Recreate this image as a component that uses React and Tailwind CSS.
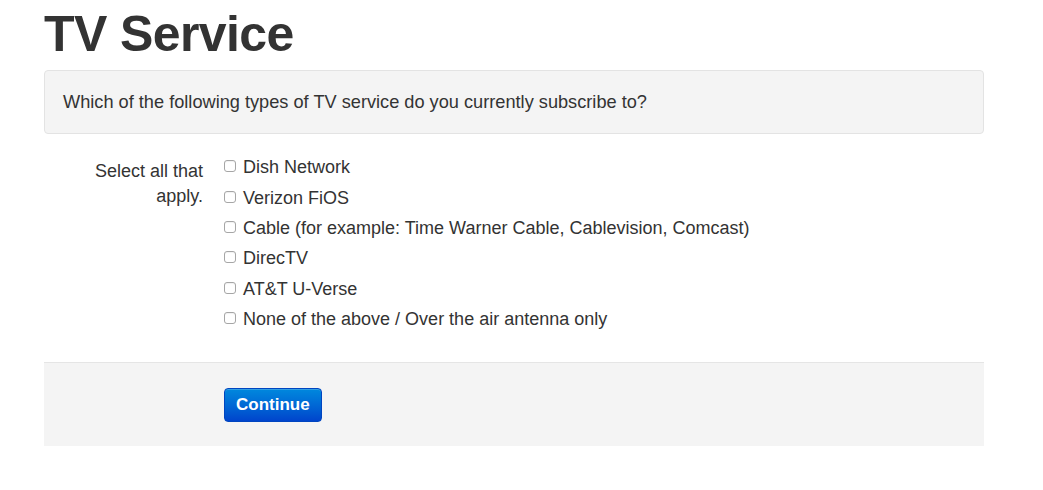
export default function App() {
  const options = [
    "Dish Network",
    "Verizon FiOS",
    "Cable (for example: Time Warner Cable, Cablevision, Comcast)",
    "DirecTV",
    "AT&T U-Verse",
    "None of the above / Over the air antenna only",
  ];
  return (
    <div
      className="min-h-[490px] bg-white text-[#333333] px-[44px]"
      style={{ fontFamily: '"Liberation Sans", Arial, Helvetica, sans-serif' }}
    >
      <div className="w-[940px]">
        <h1 className="pt-[7px] mb-[8px] text-[50px] leading-[55px] font-bold tracking-[-0.6px]">
          TV Service
        </h1>
        <div className="h-[64px] flex items-center px-[18px] bg-[#f4f4f4] border border-[#e3e3e3] rounded-[4px] text-[18.2px] leading-[24px]">
          Which of the following types of TV service do you currently subscribe to?
        </div>
        <div className="flex mt-[18px]">
          <div className="w-[160px] text-right text-[18px] leading-[25px] pt-[7px] pr-[1px]">
            Select all that
            <br />
            apply.
          </div>
          <div className="pl-[20px] flex flex-col">
            {options.map((o) => (
              <label key={o} className="h-[30.4px] flex items-center text-[18px] leading-[24px]">
                <span className="w-[12px] h-[12px] mr-[7px] -translate-y-[1px] rounded-[3px] border border-[#a6a6a6] bg-white shadow-[inset_0_1px_1px_rgba(0,0,0,0.06)]" />
                {o}
              </label>
            ))}
          </div>
        </div>
        <div className="mt-[28px] h-[84px] bg-[#f4f4f4] border-t border-[#e5e5e5] flex items-center pl-[180px]">
          <button className="h-[34px] px-[11px] rounded-[4px] border border-[#0045c0] bg-gradient-to-b from-[#0088dd] to-[#0044cc] text-white font-bold text-[17px] leading-[20px] shadow-[inset_0_1px_0_rgba(255,255,255,0.2)]">
            Continue
          </button>
        </div>
      </div>
    </div>
  );
}
